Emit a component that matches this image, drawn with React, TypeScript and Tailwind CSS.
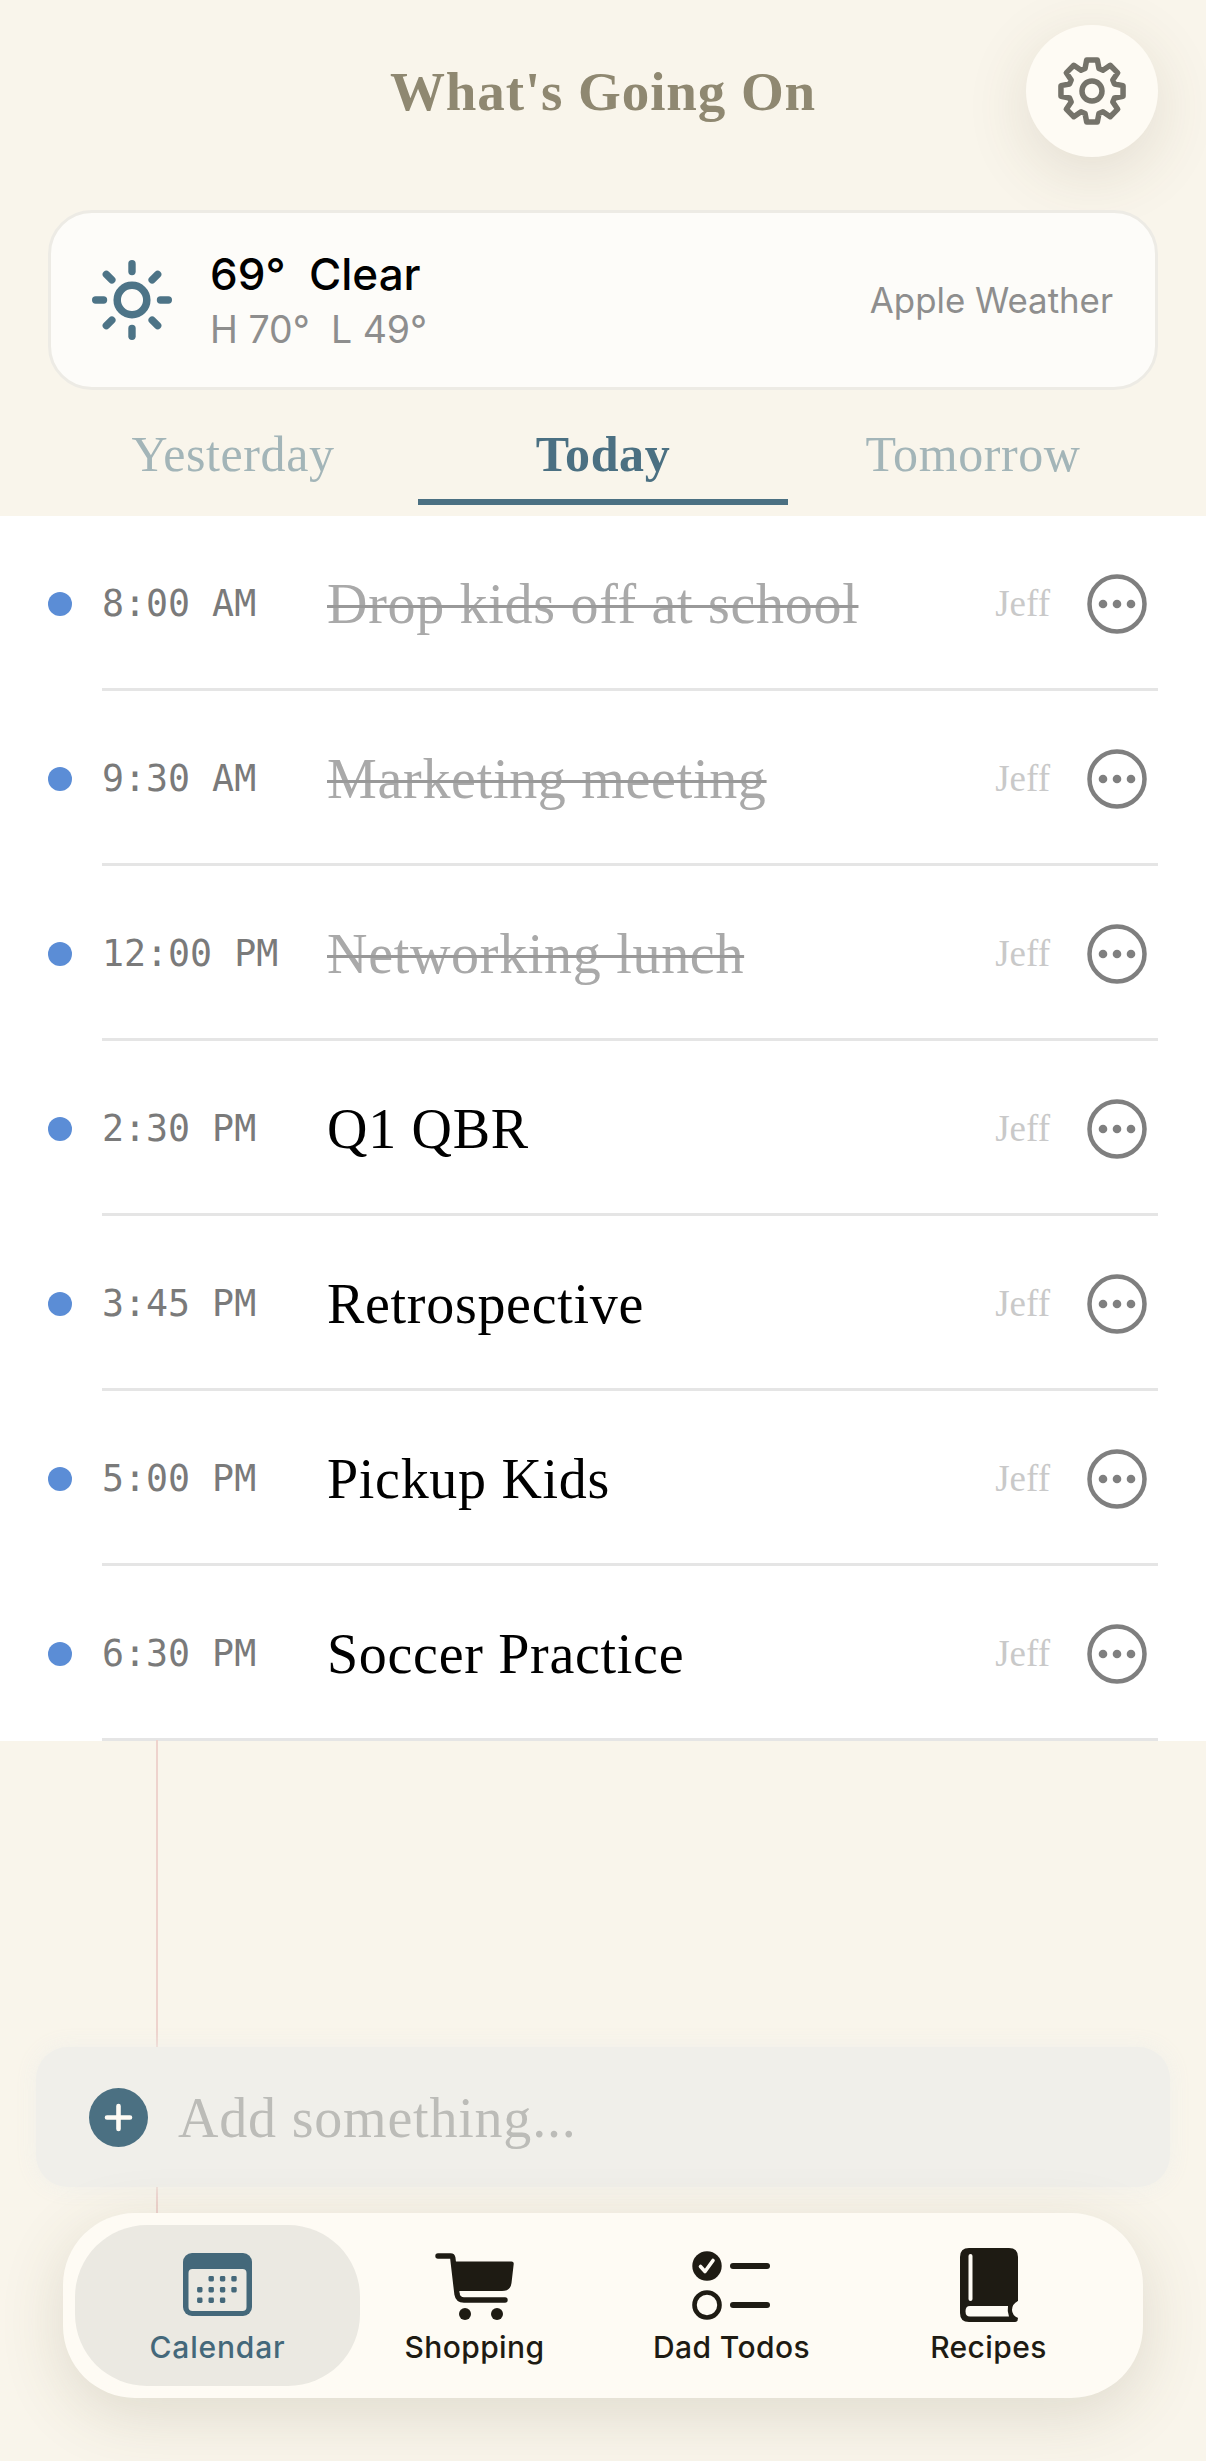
import React from "react";

const serif = "font-['Liberation_Serif',serif]";
const sans = "font-['Inter',sans-serif]";

function gearPath() {
  const pts: string[] = [];
  const cx = 35, cy = 35;
  for (let i = 0; i < 8; i++) {
    const a = (i * Math.PI) / 4 - Math.PI / 2;
    const seq: [number, number][] = [
      [23.5, -0.3],
      [31.5, -0.17],
      [31.5, 0.17],
      [23.5, 0.3],
    ];
    for (const [r, d] of seq) {
      pts.push(`${(cx + r * Math.cos(a + d)).toFixed(2)} ${(cy + r * Math.sin(a + d)).toFixed(2)}`);
    }
  }
  return "M" + pts.join("L") + "Z";
}

function Gear() {
  return (
    <svg width="70" height="70" viewBox="0 0 70 70" fill="none" stroke="#75736a" strokeWidth="5.5" strokeLinejoin="round">
      <path d={gearPath()} />
      <circle cx="35" cy="35" r="10" />
    </svg>
  );
}

function Sun() {
  const rays = [0, 45, 90, 135, 180, 225, 270, 315];
  return (
    <svg width="80" height="80" viewBox="0 0 80 80" fill="none" stroke="#4d7487" className="shrink-0">
      <circle cx="40" cy="40" r="14.8" strokeWidth="7.5" />
      {rays.map((r) => (
        <line key={r} x1="40" y1="3.7" x2="40" y2="11.5" strokeWidth="7.4" strokeLinecap="round" transform={`rotate(${r} 40 40)`} />
      ))}
    </svg>
  );
}

function More() {
  return (
    <svg width="60" height="60" viewBox="0 0 60 60" fill="none">
      <circle cx="30" cy="30" r="27.5" stroke="#7f7f7f" strokeWidth="4.5" />
      <circle cx="16" cy="30" r="4.3" fill="#7f7f7f" />
      <circle cx="30" cy="30" r="4.3" fill="#7f7f7f" />
      <circle cx="44" cy="30" r="4.3" fill="#7f7f7f" />
    </svg>
  );
}

function CalendarIcon() {
  const dots: [number, number][] = [
    [28.2, 25.7], [39.6, 25.7], [51, 25.7],
    [16.8, 36.7], [28.2, 36.7], [39.6, 36.7], [51, 36.7],
    [16.8, 47.3], [28.2, 47.3], [39.6, 47.3],
  ];
  return (
    <svg width="69" height="63" viewBox="0 0 69 63" className="mb-[6px]">
      <rect width="69" height="63" rx="9" fill="#44687a" />
      <rect x="5.5" y="16" width="58" height="42" rx="4" fill="#ebe9e2" />
      {dots.map(([x, y]) => (
        <rect key={`${x}-${y}`} x={x - 2.7} y={y - 2.7} width="5.4" height="5.4" rx="1.4" fill="#44687a" />
      ))}
    </svg>
  );
}

function Cart() {
  return (
    <svg width="80" height="68" viewBox="0 0 80 68" fill="none" className="mb-px">
      <path d="M3 3H15.5Q17.5 3 17.8 5L22 41Q23 47 29 47H70" stroke="#1e1b13" strokeWidth="5.4" strokeLinecap="round" strokeLinejoin="round" />
      <path d="M18.5 8.5H76.5Q79 8.5 78.7 11L76.5 30Q75.5 38 67 38H22.5Z" fill="#1e1b13" />
      <circle cx="30" cy="61" r="6" fill="#1e1b13" />
      <circle cx="62" cy="61" r="6" fill="#1e1b13" />
    </svg>
  );
}

function Todos() {
  return (
    <svg width="80" height="72" viewBox="0 0 80 72" fill="none">
      <circle cx="15" cy="16" r="14.7" fill="#1e1b13" />
      <path d="M8.5 16.5L13 21.5L21 10.5" stroke="#fefbf4" strokeWidth="3.6" strokeLinecap="round" strokeLinejoin="round" />
      <circle cx="15" cy="55" r="12.5" stroke="#1e1b13" strokeWidth="4.6" />
      <line x1="41" y1="16" x2="75" y2="16" stroke="#1e1b13" strokeWidth="6" strokeLinecap="round" />
      <line x1="41" y1="55" x2="75" y2="55" stroke="#1e1b13" strokeWidth="6" strokeLinecap="round" />
    </svg>
  );
}

function Book() {
  return (
    <svg width="58" height="74" viewBox="0 0 58 74">
      <path
        d="M9 0H49Q58 0 58 9V53Q52 56 52 62Q52 67 58 70Q58 74 55 74H9Q0 74 0 65V9Q0 0 9 0Z"
        fill="#1e1b13"
      />
      <rect x="8.5" y="6" width="4" height="47" rx="2" fill="#fefbf4" />
      <path d="M10 58H48Q47 63 49 68.5H10Q5.5 68.5 5.5 63.2Q5.5 58 10 58Z" fill="#fefbf4" />
    </svg>
  );
}

function Plus() {
  return (
    <svg width="59" height="59" viewBox="0 0 59 59" fill="none" className="shrink-0">
      <circle cx="29.5" cy="29.5" r="29.5" fill="#4b7082" />
      <path d="M29.5 18V41M18 29.5H41" stroke="#fefbf4" strokeWidth="4.6" strokeLinecap="round" />
    </svg>
  );
}

const events = [
  { time: "8:00 AM", title: "Drop kids off at school", done: true },
  { time: "9:30 AM", title: "Marketing meeting", done: true },
  { time: "12:00 PM", title: "Networking lunch", done: true },
  { time: "2:30 PM", title: "Q1 QBR", done: false },
  { time: "3:45 PM", title: "Retrospective", done: false },
  { time: "5:00 PM", title: "Pickup Kids", done: false },
  { time: "6:30 PM", title: "Soccer Practice", done: false },
];

function Row({ time, title, done }: { time: string; title: string; done: boolean }) {
  return (
    <div className="flex h-[175px] items-center pl-[48px] pr-[48px]">
      <div className="mr-[30px] h-[24px] w-[24px] shrink-0 rounded-full bg-[#5b8dd6]" />
      <div className="flex h-full flex-1 items-center border-b-[3px] border-[#e5e5e5] pt-[3px]">
        <div className="mt-[2px] w-[225px] shrink-0 font-['DejaVu_Sans_Mono',monospace] text-[36.6px] leading-none text-[#7a7a7a]">
          {time}
        </div>
        <div className="flex-1">
          <span
            className={`${serif} text-[56px] leading-none tracking-[0.7px] ${
              done ? "text-[#a9a9a9] line-through decoration-[3px] decoration-[#999999]" : "text-black"
            }`}
          >
            {title}
          </span>
        </div>
        <div className={`mr-[37px] ${serif} text-[37px] leading-none text-[#c9c9c9]`}>Jeff</div>
        <div className="mr-[11px] h-[60px] w-[60px] shrink-0">
          <More />
        </div>
      </div>
    </div>
  );
}

function NavItem({ icon, label, active }: { icon: React.ReactNode; label: string; active?: boolean }) {
  return (
    <div
      className={`flex flex-col items-center ${
        active ? "-mx-[14px] rounded-[72px] bg-[#ebe9e2] text-[#44687a]" : "text-[#1e1b13]"
      }`}
    >
      <div className="flex h-[97px] w-full items-end justify-center">{icon}</div>
      <div
        className={`mt-[7px] ${sans} text-[30px] font-medium leading-[36px] ${
          active ? "tracking-[0.8px]" : "tracking-[0.4px]"
        }`}
      >
        {label}
      </div>
    </div>
  );
}

function Tab({ label, active }: { label: string; active?: boolean }) {
  return (
    <div
      className={`flex h-[90px] items-center justify-center border-b-[6px] pb-[7px] ${serif} text-[50px] leading-none tracking-[0.6px] ${
        active ? "border-[#4b7082] font-bold text-[#4b7082]" : "border-transparent text-[#a3b5b8]"
      }`}
    >
      {label}
    </div>
  );
}

export default function App() {
  return (
    <div className="relative flex h-[2461px] w-[1206px] flex-col overflow-hidden bg-[#f9f5eb]">
      <div className="absolute left-[156px] top-[1740px] h-[480px] w-[2px] bg-[#eed3cd]" />

      <div className="relative grid grid-cols-[132px_1fr_132px] items-center px-[48px] pt-[25px]">
        <div />
        <div className={`${serif} text-center text-[55px] font-bold leading-none tracking-[0.9px] text-[#8f8871]`}>
          What's Going On
        </div>
        <div className="flex h-[132px] w-[132px] items-center justify-center rounded-full bg-[#fefbf4] shadow-[0_16px_64px_rgba(90,80,50,0.14)]">
          <Gear />
        </div>
      </div>

      <div className="relative mx-[48px] mt-[53px] flex h-[180px] items-center rounded-[44px] border-[3px] border-[#edebe5] bg-[#fdfcf9] pl-[41px] pr-[42px]">
        <Sun />
        <div className={`ml-[38px] flex-1 pt-[3px] ${sans}`}>
          <div className="text-[44px] font-medium leading-[55px] text-black">69°&nbsp; Clear</div>
          <div className="text-[37.5px] leading-[55px] text-[#8e8e8e]">H 70°&nbsp; L 49°</div>
        </div>
        <div className={`${sans} text-[34.8px] leading-none text-[#8e8e8e]`}>Apple Weather</div>
      </div>

      <div className="mx-[48px] mt-[25px] grid grid-cols-3">
        <Tab label="Yesterday" />
        <Tab label="Today" active />
        <Tab label="Tomorrow" />
      </div>

      <div className="mt-[11px] bg-white">
        {events.map((e) => (
          <Row key={e.time} {...e} />
        ))}
      </div>

      <div className="relative mx-[36px] mt-[306px] flex h-[140px] items-center rounded-[32px] bg-[#f0efea] pl-[53px] shadow-[0_0_20px_rgba(240,239,234,0.9)]">
        <Plus />
        <div className={`ml-[30px] pt-[2px] ${serif} text-[56px] leading-none tracking-[0.8px] text-[#bcbcb8]`}>Add something...</div>
      </div>

      <div className="relative mx-[63px] mt-[26px] grid h-[185px] grid-cols-[repeat(4,257px)] items-stretch rounded-[72px] bg-[#fefbf4] py-[12px] pl-[26px] shadow-[0_16px_64px_rgba(90,80,50,0.16)]">
        <NavItem icon={<CalendarIcon />} label="Calendar" active />
        <NavItem icon={<Cart />} label="Shopping" />
        <NavItem icon={<Todos />} label="Dad Todos" />
        <NavItem icon={<Book />} label="Recipes" />
      </div>
    </div>
  );
}
